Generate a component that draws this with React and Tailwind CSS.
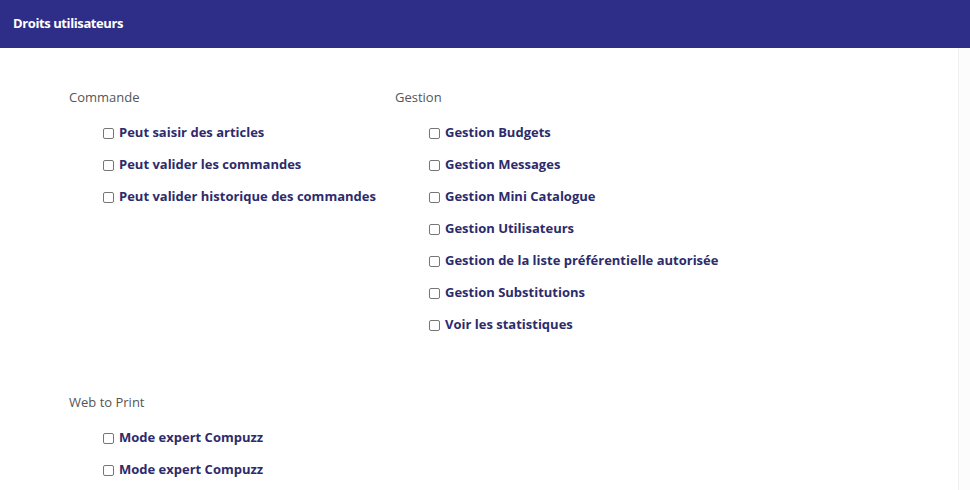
import React from "react";

const sections = [
  {
    title: "Commande",
    items: ["Peut saisir des articles", "Peut valider les commandes", "Peut valider historique des commandes"],
  },
  {
    title: "Gestion",
    items: [
      "Gestion Budgets",
      "Gestion Messages",
      "Gestion Mini Catalogue",
      "Gestion Utilisateurs",
      "Gestion de la liste préférentielle autorisée",
      "Gestion Substitutions",
      "Voir les statistiques",
    ],
  },
];

function Section({ title, items }) {
  return (
    <div className="w-[326px] pt-[40px]">
      <h3 className="text-[13px] leading-[18px] text-[#555555]">{title}</h3>
      <ul className="mt-[11px] pl-[34px]">
        {items.map((label, i) => (
          <li key={i} className="h-[32px] flex items-center">
            <label className="flex items-center gap-[5px] text-[13px] font-bold text-[#2d2b6b] cursor-pointer">
              <input type="checkbox" className="w-[11px] h-[11px] m-0 appearance-none border border-[#767676] rounded-[2px] bg-white" />
              {label}
            </label>
          </li>
        ))}
      </ul>
    </div>
  );
}

export default function App() {
  return (
    <div className="w-[970px] h-[490px] bg-white overflow-hidden flex flex-col" style={{ fontFamily: '"Open Sans", "Noto Sans", sans-serif' }}>
      <div className="h-[48px] bg-[#2e2d88] flex items-center px-[13px]">
        <h2 className="text-white text-[13px] font-bold tracking-[-0.4px]">Droits utilisateurs</h2>
      </div>
      <div className="flex flex-1">
        <div className="flex-1 pl-[69px]">
          <div className="flex">
            {sections.map((s) => (
              <Section key={s.title} {...s} />
            ))}
          </div>
          <div className="pt-[12px]">
            <Section title="Web to Print" items={["Mode expert Compuzz", "Mode expert Compuzz"]} />
          </div>
        </div>
        <div className="w-[12px] border-l border-[#f0f0f0] bg-[#fcfcfc]" />
      </div>
    </div>
  );
}
